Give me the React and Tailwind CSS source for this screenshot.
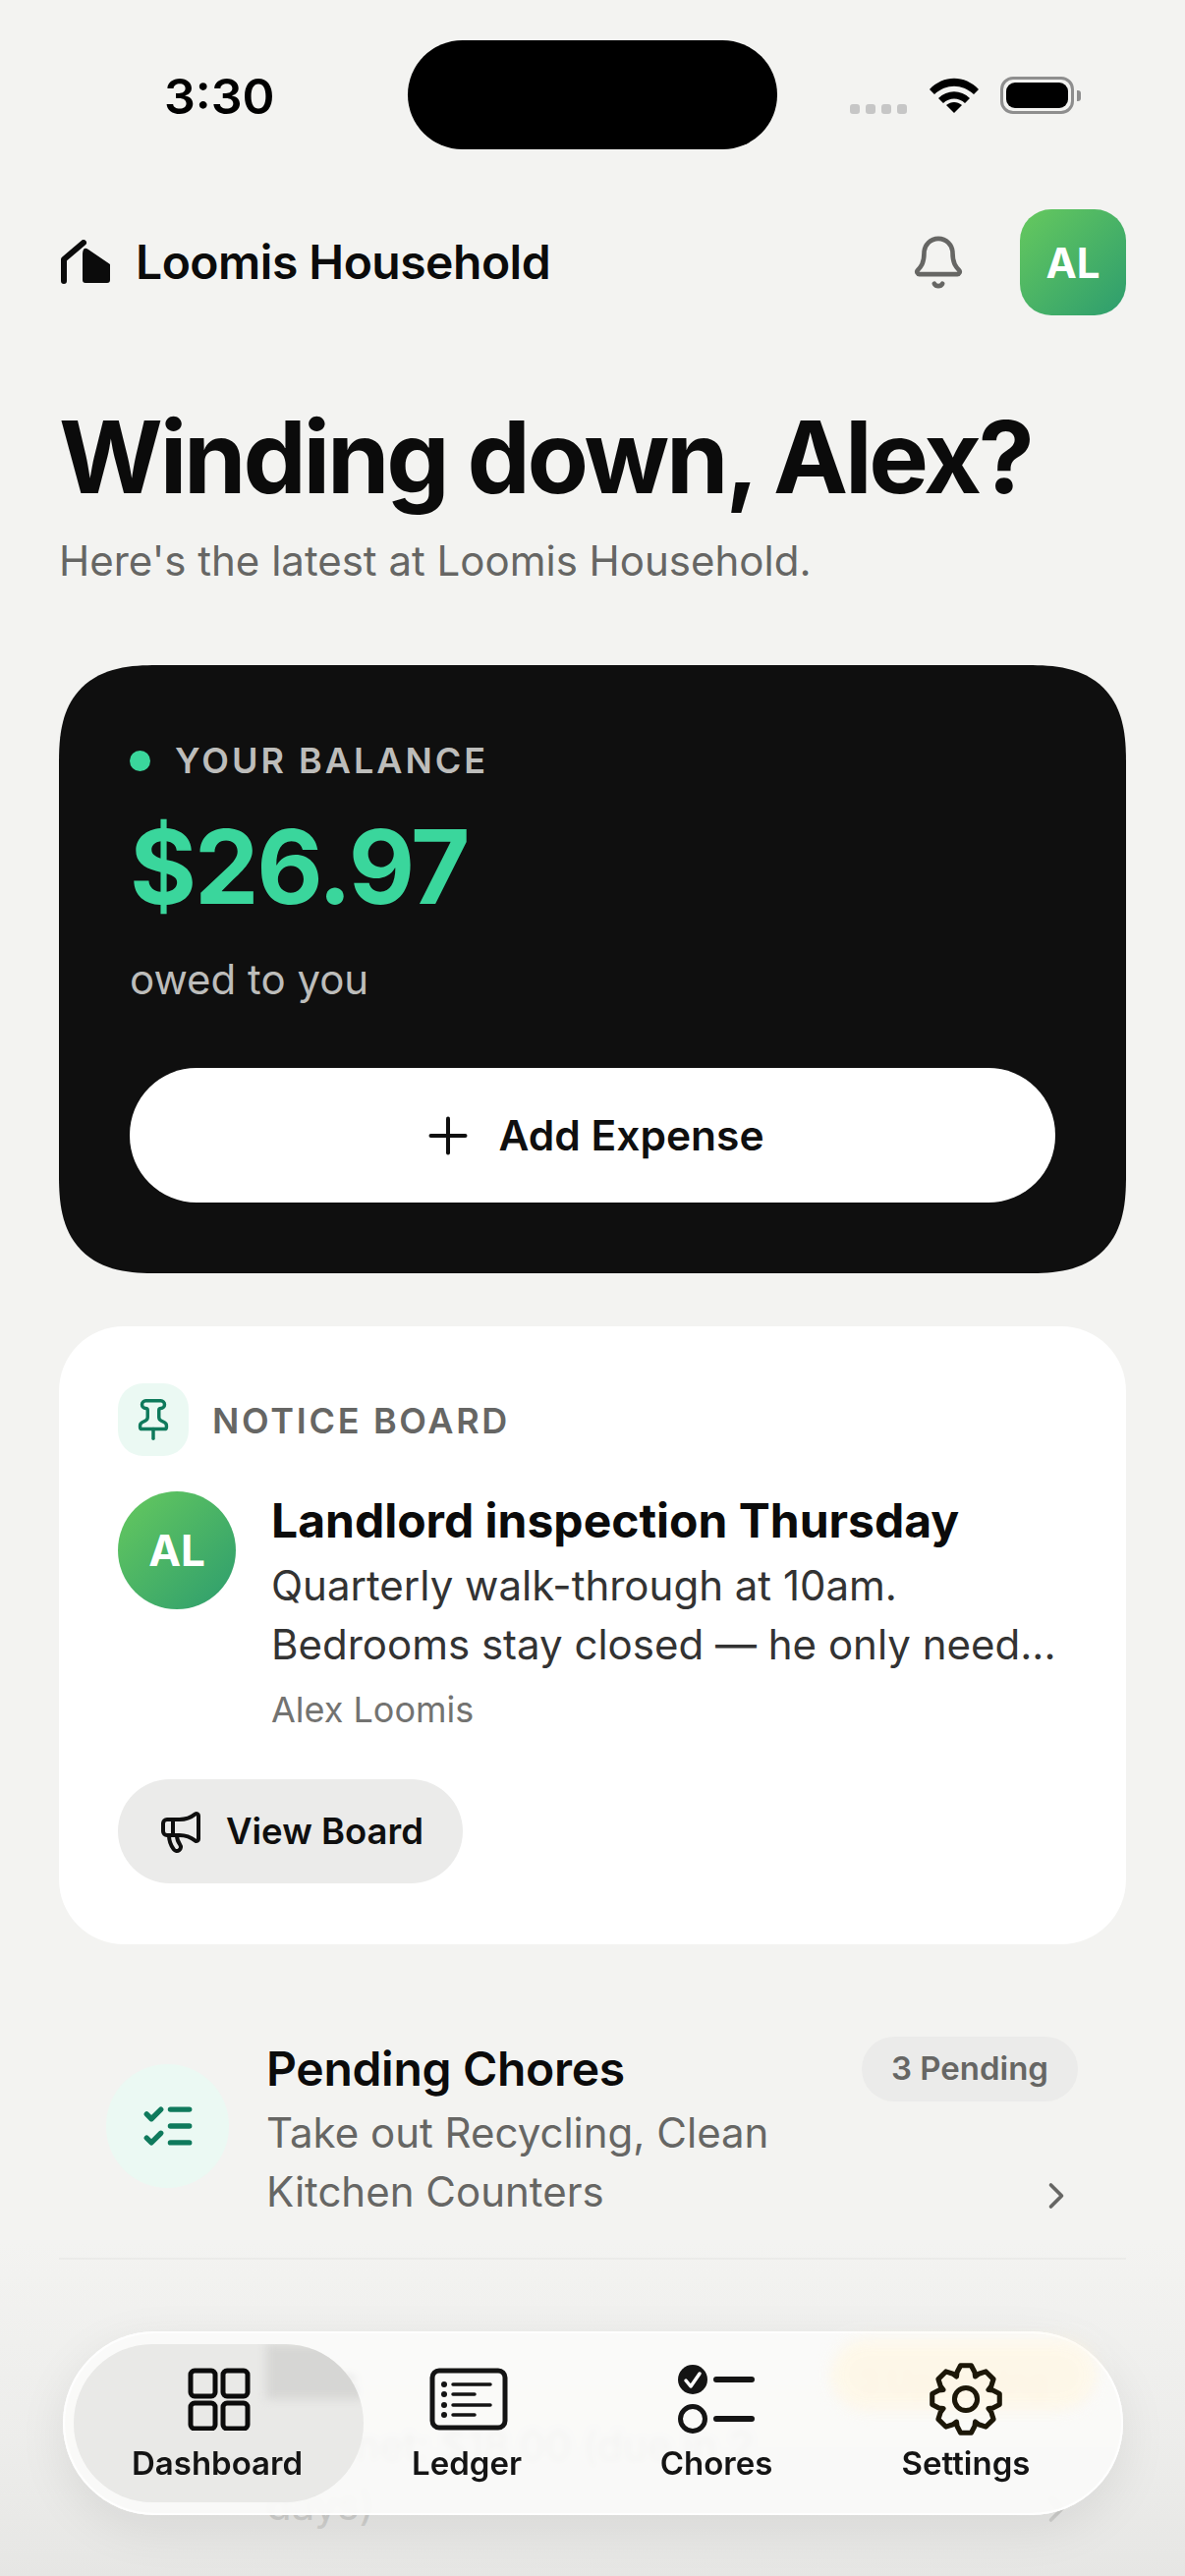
import React from "react";
import { Bell, Pin, Megaphone, Plus, ChevronRight, ListChecks } from "lucide-react";

const gradient = "bg-[linear-gradient(135deg,#66c95e_0%,#2d9d6e_100%)]";

// Rueda dentada de 8 dientes para la pestaña de ajustes
const gearPath = () => {
  const teeth = 8;
  const pts = [];
  for (let i = 0; i < teeth; i++) {
    const a = (i * 2 * Math.PI) / teeth - Math.PI / 2;
    const step = (2 * Math.PI) / teeth;
    const add = (r, off) =>
      pts.push(`${(32 + r * Math.cos(a + off * step)).toFixed(2)} ${(32 + r * Math.sin(a + off * step)).toFixed(2)}`);
    add(25, -0.4);
    add(30, -0.2);
    add(30, 0.2);
    add(25, 0.4);
    add(21.5, 0.5);
  }
  return `M${pts.join("L")}Z`;
};

const StatusBar = () => (
  <div className="relative h-[200px] shrink-0">
    <span className="absolute left-[167px] top-[69px] text-[50px] leading-[58px] font-semibold text-black">3:30</span>
    <div className="absolute left-[415px] top-[41px] h-[111px] w-[376px] rounded-[56px] bg-black" />
    <div className="absolute left-[865px] top-[106px] flex gap-[6px]">
      <span className="h-[10px] w-[10px] rounded-[3px] bg-[#c6c6c6]" />
      <span className="h-[10px] w-[10px] rounded-[3px] bg-[#c6c6c6]" />
      <span className="h-[10px] w-[10px] rounded-[3px] bg-[#c6c6c6]" />
      <span className="h-[10px] w-[10px] rounded-[3px] bg-[#c6c6c6]" />
    </div>
    <svg className="absolute left-[945px] top-[78px]" width="52" height="38" viewBox="0 0 52 38">
      <path d="M1 13C15 -2 37 -2 51 13L46 18C34 7 18 7 6 18Z" fill="#000" />
      <path d="M10 22C19 13 33 13 42 22L37 27C31 21 21 21 15 27Z" fill="#000" />
      <path d="M18 29C23 25 29 25 34 29L26 37Z" fill="#000" />
    </svg>
    <div className="absolute left-[1018px] top-[78px] flex h-[38px] w-[75px] items-center justify-center rounded-[13px] border-[3px] border-[#8e8e8e]">
      <div className="h-[26px] w-[63px] rounded-[9px] bg-black" />
    </div>
    <div className="absolute left-[1096px] top-[92px] h-[11px] w-[4px] rounded-r-[3px] bg-[#8e8e8e]" />
  </div>
);

const Header = () => (
  <div className="flex items-center justify-between pt-[13px] pl-[62px] pr-[60px]">
    <div className="flex items-center gap-[26px]">
      <svg width="50" height="46" viewBox="0 0 50 46">
        <path d="M3 42V20L23 3" fill="none" stroke="#0b0b0b" strokeWidth="6" strokeLinecap="round" strokeLinejoin="round" />
        <path d="M22 16C22 9 24 7 28 10L50 25V41C50 43 49 44 47 44H25C23 44 22 43 22 41Z" fill="#0b0b0b" />
      </svg>
      <h1 className="text-[48px] leading-[58px] font-semibold tracking-[-0.5px] text-[#0b0b0b]">Loomis Household</h1>
    </div>
    <div className="flex items-center gap-[54px]">
      <Bell size={58} strokeWidth={1.9} className="text-[#666664]" />
      <div className={`flex h-[108px] w-[108px] items-center justify-center rounded-[32px] ${gradient} text-[42px] font-bold text-white`}>
        AL
      </div>
    </div>
  </div>
);

const BalanceCard = () => (
  <section className="mx-[60px] mt-[80px] rounded-[100px] bg-[#0f0f0f] px-[72px] pt-[72px] pb-[72px] [corner-shape:superellipse(1.4)]">
    <div className="flex items-center gap-[25px]">
      <span className="h-[21px] w-[21px] rounded-full bg-[#3ad69c]" />
      <span className="text-[36px] leading-[50px] font-semibold tracking-[3px] text-[#bdbdbb]">YOUR BALANCE</span>
    </div>
    <div className="mt-[25px] text-[104px] leading-[116px] font-bold tracking-[-2.2px] text-[#3ad69c]">$26.97</div>
    <div className="mt-[31px] text-[42px] leading-[52px] text-[#bdbdbb]">owed to you</div>
    <button className="mt-[64px] flex h-[137px] w-full items-center justify-center gap-[21px] rounded-[68px] bg-white pr-[2px] text-[42.5px] font-semibold text-[#0f0f0f]">
      <Plus size={60} strokeWidth={1.6} />
      Add Expense
    </button>
  </section>
);

const NoticeCard = () => (
  <section className="mx-[60px] mt-[54px] rounded-[66px] bg-white px-[60px] pt-[58px] pb-[62px]">
    <div className="flex items-center gap-[24px]">
      <div className="flex h-[74px] w-[72px] items-center justify-center rounded-[26px] bg-[#ebf9f3]">
        <Pin size={46} strokeWidth={1.8} className="text-[#0f7a5c]" />
      </div>
      <span className="pt-[2px] text-[36px] leading-[48px] font-semibold tracking-[2.7px] text-[#666664]">NOTICE BOARD</span>
    </div>
    <div className="mt-[36px] flex gap-[36px]">
      <div className={`flex h-[120px] w-[120px] shrink-0 items-center justify-center rounded-full ${gradient} text-[44px] font-bold text-white`}>
        AL
      </div>
      <div className="min-w-0 flex-1">
        <h2 className="text-[48px] leading-[60px] font-bold text-[#0b0b0b]">Landlord inspection Thursday</h2>
        <p className="mt-[6px] text-[42px] leading-[60px] whitespace-nowrap text-[#333333]">
          Quarterly walk-through at 10am.
          <br />
          Bedrooms stay closed — he only need...
        </p>
        <p className="mt-[14px] text-[36px] leading-[44px] text-[#737371]">Alex Loomis</p>
      </div>
    </div>
    <button className="mt-[49px] flex h-[106px] items-center gap-[22px] rounded-[53px] bg-[#ebebea] pl-[40px] pr-[40px] text-[36.5px] font-semibold text-[#0f0f0f]">
      <Megaphone size={48} strokeWidth={2} />
      View Board
    </button>
  </section>
);

const ListRow = ({ iconBg, icon, title, badge, badgeClass, lines }) => (
  <div className="flex items-start gap-[38px] pl-[108px] pr-[109px]">
    <div className={`mt-[28px] flex h-[126px] w-[125px] shrink-0 items-center justify-center rounded-full ${iconBg}`}>
      {icon}
    </div>
    <div className="min-w-0 flex-1">
      <div className="flex items-center justify-between">
        <h3 className="text-[48px] leading-[60px] font-semibold tracking-[-0.3px] text-[#0b0b0b]">{title}</h3>
        <span className={`flex h-[66px] items-center rounded-[33px] px-[30px] text-[33px] font-semibold ${badgeClass}`}>{badge}</span>
      </div>
      <div className="mt-[2px] flex items-end justify-between">
        <p className="text-[42px] leading-[60px] text-[#666664]">
          {lines.map((l) => (
            <span key={l} className="block">
              {l}
            </span>
          ))}
        </p>
        <ChevronRight size={44} strokeWidth={2} className="mb-[4px] text-[#666664]" />
      </div>
    </div>
  </div>
);

const TabItem = ({ label, icon, iconClass }) => (
  <div className="flex flex-col items-center">
    <div className={`flex h-[80px] items-center justify-center pt-[7px] ${iconClass}`}>{icon}</div>
    <span className="mt-[9px] text-[33px] leading-[40px] font-semibold text-[#141414]">{label}</span>
  </div>
);

const TabBar = () => (
  <>
    {/* sombra que oscurece el final de la página */}
    <div className="absolute inset-x-0 bottom-0 h-[340px] bg-[linear-gradient(180deg,rgba(232,232,230,0)_0%,rgba(232,232,230,0.55)_60%,#e6e6e4_100%)]" />
    <nav className="absolute left-[64px] top-[2373px] h-[187px] w-[1079px] rounded-[94px] bg-[#fbfbf9]/90 shadow-[0_14px_50px_rgba(0,0,0,0.08),inset_0_0_0_2px_rgba(255,255,255,0.9)] backdrop-blur-[3px]">
      <div className="absolute left-[11px] top-[13px] h-[161px] w-[295px] overflow-hidden rounded-[80px] bg-[#e9e9e7]">
        <div className="absolute left-[196px] top-0 h-[56px] w-[100px] bg-[#d6d6d4] blur-[5px]" />
      </div>
      <div className="absolute left-[782px] top-[8px] h-[72px] w-[270px] rounded-[40px] bg-[#fff6e2]/70 blur-[8px]" />
      <div className="relative grid h-full grid-cols-4 pl-[30px] pr-[33px] pt-[25px]">
        <TabItem
          label="Dashboard"
          iconClass="ml-[4px]"
          icon={
            <svg width="64" height="64" viewBox="0 0 64 64" fill="none" stroke="#0b0b0b" strokeWidth="5">
              <rect x="3" y="3" width="25" height="26" rx="4" />
              <rect x="36" y="3" width="25" height="26" rx="4" />
              <rect x="3" y="36" width="25" height="26" rx="4" />
              <rect x="36" y="36" width="25" height="26" rx="4" />
            </svg>
          }
        />
        <TabItem
          label="Ledger"
          iconClass="ml-[3px]"
          icon={
            <svg width="80" height="64" viewBox="0 0 80 64" fill="none" stroke="#141414" strokeWidth="5">
              <rect x="3" y="3" width="74" height="58" rx="7" />
              <g stroke="#141414" strokeWidth="3.5" strokeLinecap="round">
                <path d="M24 17H62M24 27H46M24 38H62M24 48H46" />
              </g>
              <g fill="#141414" stroke="none">
                <circle cx="15" cy="17" r="3" />
                <circle cx="15" cy="27" r="3" />
                <circle cx="15" cy="38" r="3" />
                <circle cx="15" cy="48" r="3" />
              </g>
            </svg>
          }
        />
        <TabItem
          label="Chores"
          icon={
            <svg width="78" height="70" viewBox="0 0 78 70" fill="none">
              <circle cx="15" cy="15" r="15" fill="#141414" />
              <path d="M8 16L13 22L22 9" stroke="#fff" strokeWidth="3.5" strokeLinecap="round" strokeLinejoin="round" />
              <circle cx="15" cy="55" r="12.5" stroke="#141414" strokeWidth="5" />
              <path d="M39 15H75M39 55H75" stroke="#141414" strokeWidth="6" strokeLinecap="round" />
            </svg>
          }
        />
        <TabItem
          label="Settings"
          icon={
            <svg width="74" height="74" viewBox="0 0 64 64" fill="none" stroke="#1c1708" strokeWidth="4.4" strokeLinejoin="round">
              <path d={gearPath()} />
              <circle cx="32" cy="32" r="10" />
            </svg>
          }
        />
      </div>
    </nav>
  </>
);

export default function App() {
  return (
    <div className="relative flex h-[2622px] w-[1206px] flex-col overflow-hidden bg-[#f3f3f1] font-['Inter',sans-serif]">
      <StatusBar />
      <Header />
      <div className="mt-[86px] pl-[60px]">
        <h2 className="text-[102px] leading-[116px] font-bold tracking-[-3.2px] text-[#0b0b0b]">Winding down, Alex?</h2>
        <p className="mt-[22px] text-[42px] leading-[52px] text-[#666664]">Here's the latest at Loomis Household.</p>
      </div>
      <BalanceCard />
      <NoticeCard />
      <div className="mt-[94px]">
        <ListRow
          iconBg="bg-[#ebf9f3]"
          icon={<ListChecks size={58} strokeWidth={2.2} className="text-[#0f7a5c]" />}
          title="Pending Chores"
          badge="3 Pending"
          badgeClass="bg-[#ebebea] text-[#666664]"
          lines={["Take out Recycling, Clean", "Kitchen Counters"]}
        />
      </div>
      <div className="mx-[60px] mt-[37px] h-[2px] bg-[#ebebe9]" />
      <div className="mt-[92px]">
        <ListRow
          iconBg="bg-[#fdf4e0]"
          icon={null}
          title="Bills"
          badge="3 Upcoming"
          badgeClass="bg-[#fdf1d2] text-[#c98a2b]"
          lines={["Internet: $18.00 (due in 2", "days)"]}
        />
      </div>
      <TabBar />
    </div>
  );
}
